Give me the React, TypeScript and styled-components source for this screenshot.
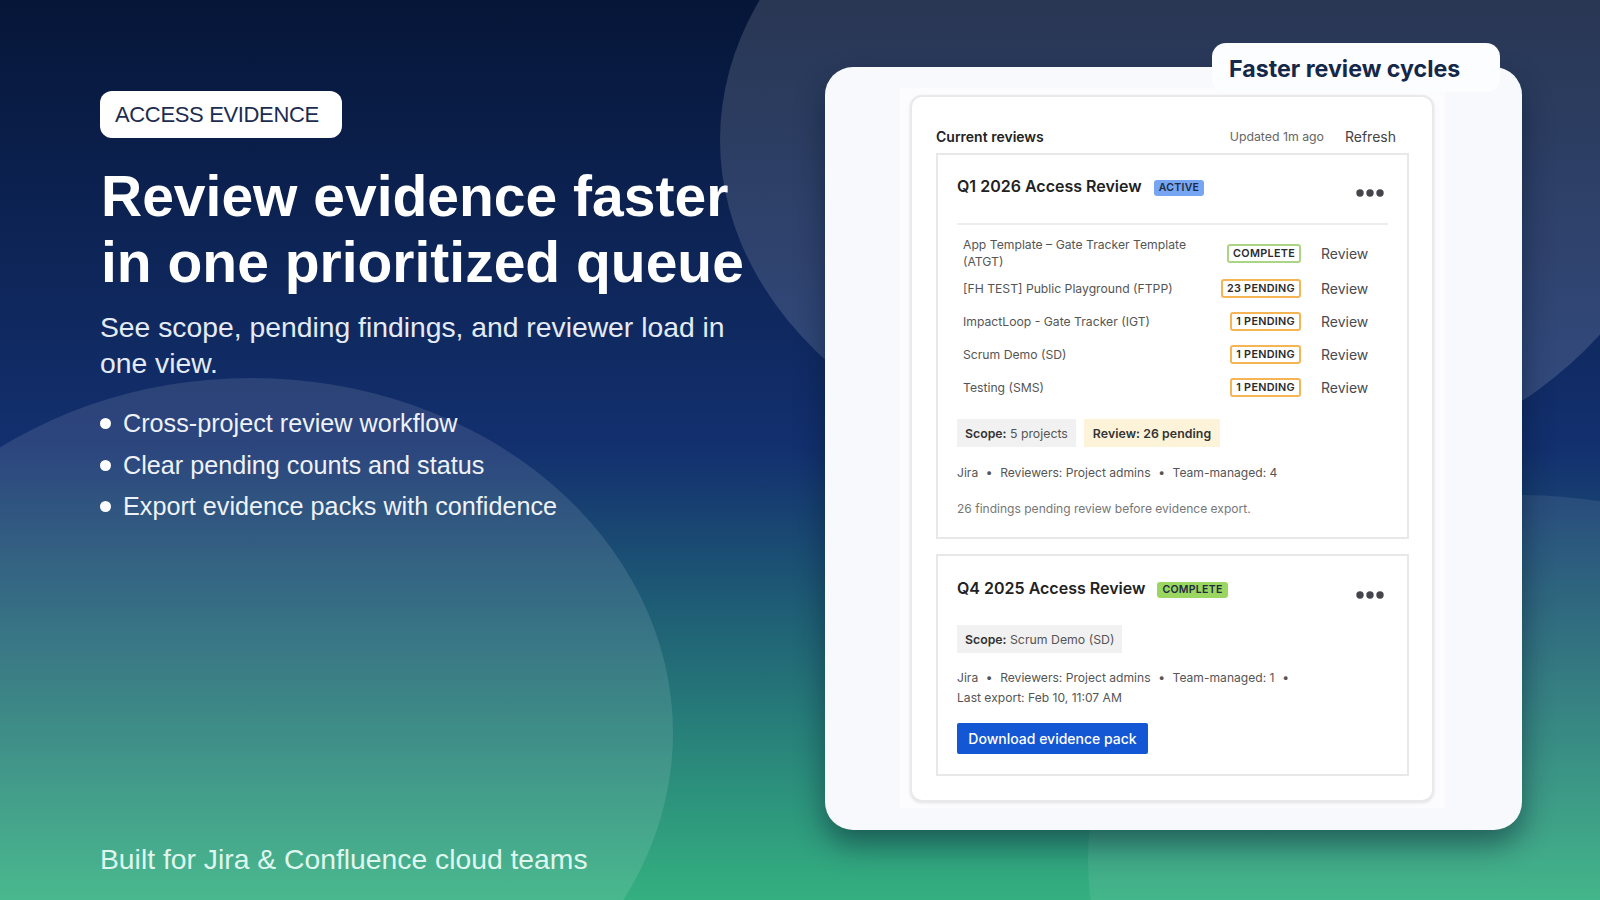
import React from "react";
import styled, { createGlobalStyle } from "styled-components";

const Global = createGlobalStyle`
  html, body { margin: 0; padding: 0; }
  body { font-family: "Liberation Sans", Arial, sans-serif; }
  * { box-sizing: border-box; }
`;

const Page = styled.div`
  position: relative;
  width: 1600px;
  height: 900px;
  overflow: hidden;
  display: flex;
  justify-content: space-between;
  background: linear-gradient(180deg, #061638 0%, #13306f 50%, #34b080 100%);
`;

const Blob = styled.div<{ $x: number; $y: number; $rx: number; $ry: number; $a: number }>`
  position: absolute;
  left: ${(p) => p.$x - p.$rx}px;
  top: ${(p) => p.$y - p.$ry}px;
  width: ${(p) => p.$rx * 2}px;
  height: ${(p) => p.$ry * 2}px;
  border-radius: 50%;
  background: rgba(255, 255, 255, ${(p) => p.$a});
`;

const Left = styled.section`
  position: relative;
  width: 700px;
  height: 900px;
  padding: 91px 0 23px 100px;
  display: flex;
  flex-direction: column;
  align-items: flex-start;
`;

const Eyebrow = styled.div`
  height: 47px;
  padding: 0 23px 0 15px;
  display: flex;
  align-items: center;
  background: #fff;
  border-radius: 12px;
  color: #1c2c50;
  font-size: 22px;
  letter-spacing: -0.35px;
  white-space: nowrap;
`;

const Heading = styled.h1`
  margin: 25px 0 0 1px;
  font-size: 57px;
  line-height: 66px;
  font-weight: 700;
  color: #fff;
  white-space: nowrap;
`;

const Lead = styled.p`
  margin: 15px 0 0;
  width: 640px;
  font-size: 28.3px;
  line-height: 35.5px;
  color: #e4ebf5;
`;

const Bullets = styled.ul`
  margin: 21.5px 0 0;
  padding: 0;
  list-style: none;
  display: flex;
  flex-direction: column;
`;

const Bullet = styled.li`
  height: 41.7px;
  display: flex;
  align-items: center;
  gap: 12px;
  font-size: 25.2px;
  color: #eef2f8;
  white-space: nowrap;
  &::before {
    content: "";
    width: 11px;
    height: 11px;
    border-radius: 50%;
    background: #fff;
  }
`;

const Footer = styled.div`
  margin-top: auto;
  font-size: 28.3px;
  line-height: 36px;
  color: #dff6ee;
  white-space: nowrap;
`;

const Right = styled.section`
  position: relative;
  margin: 67px 78px 0 0;
  width: 697px;
  height: 763px;
`;

const Card = styled.div`
  width: 100%;
  height: 100%;
  padding-top: 21px;
  display: flex;
  justify-content: center;
  padding-right: 2px;
  background: #f8f9fc;
  border-radius: 28px;
  box-shadow: 0 14px 30px rgba(4, 20, 40, 0.48);
`;

const Pill = styled.div`
  position: absolute;
  top: -24px;
  right: 22px;
  width: 288px;
  height: 49px;
  padding: 2px 0 0 17px;
  display: flex;
  align-items: center;
  background: #fcfdfe;
  border-radius: 14px;
  font-family: Inter, "Liberation Sans", sans-serif;
  font-size: 23.2px;
  font-weight: 700;
  color: #14284a;
  white-space: nowrap;
`;

const Shot = styled.div`
  width: 545px;
  height: 720px;
  padding: 7px 11px 0 10px;
  background: #fcfcfe;
  font-family: Inter, "Liberation Sans", sans-serif;
`;

const Panel = styled.div`
  height: 707px;
  padding: 24px 23px 0 24px;
  background: #fff;
  border: 2px solid #e9e9ec;
  border-radius: 12px;
  box-shadow: 0 1px 3px rgba(30, 40, 60, 0.12);
`;

const PanelHead = styled.div`
  height: 30px;
  margin-bottom: 2px;
  display: flex;
  align-items: center;
`;

const PanelTitle = styled.div`
  flex: 1;
  font-size: 14px;
  font-weight: 600;
  color: #222;
`;

const Updated = styled.div`
  font-size: 12.3px;
  color: #666;
`;

const Refresh = styled.div`
  margin: 0 13px 0 21px;
  font-size: 14px;
  color: #444;
`;

const ReviewCard = styled.article`
  padding: 0 19px 18px;
  background: #fff;
  border: 2px solid #e8e8ea;
  & + & {
    margin-top: 15px;
  }
`;

const CardHead = styled.header<{ $divided?: boolean }>`
  height: ${(p) => (p.$divided ? 70 : 69)}px;
  padding-top: ${(p) => (p.$divided ? 19 : 20)}px;
  display: flex;
  align-items: flex-start;
  ${(p) => p.$divided && "border-bottom: 2px solid #eeeeef;"}
`;

const CardTitle = styled.h2`
  margin: 0;
  height: 24px;
  display: flex;
  align-items: center;
  font-size: 16px;
  font-weight: 600;
  color: #222;
  white-space: nowrap;
`;

const State = styled.span<{ $bg: string }>`
  height: 16px;
  margin: 3px 0 0 12px;
  padding: 0 5px;
  display: flex;
  align-items: center;
  background: ${(p) => p.$bg};
  border-radius: 3px;
  font-size: 10.5px;
  font-weight: 600;
  letter-spacing: 0.3px;
  color: #1c2b41;
`;

const More = styled.svg`
  margin: 14px 4px 0 auto;
`;

const Rows = styled.div`
  margin-top: 9px;
  padding-left: 6px;
`;

const Row = styled.div<{ $tall?: boolean }>`
  height: ${(p) => (p.$tall ? 38 : 33)}px;
  display: flex;
  align-items: center;
`;

const Name = styled.div`
  flex: 1;
  max-width: 235px;
  font-size: 12.2px;
  line-height: 17px;
  color: #555;
`;

const Status = styled.span<{ $tone: string }>`
  margin-left: auto;
  height: 19px;
  padding: 0 4px;
  display: flex;
  align-items: center;
  border: 2px solid ${(p) => p.$tone};
  border-radius: 3px;
  font-size: 10.8px;
  font-weight: 600;
  letter-spacing: 0.3px;
  color: #2a2a2e;
  white-space: nowrap;
`;

const ReviewLink = styled.div`
  width: 87px;
  padding-left: 20px;
  font-size: 14px;
  color: #4a4a4f;
`;

const Stats = styled.div<{ $tight?: boolean }>`
  margin-top: ${(p) => (p.$tight ? 0 : 15)}px;
  display: flex;
  gap: 8px;
`;

const Stat = styled.div<{ $warm?: boolean }>`
  height: 28px;
  padding: 0 ${(p) => (p.$warm ? 9 : 8)}px;
  display: flex;
  align-items: center;
  white-space: pre;
  background: ${(p) => (p.$warm ? "#fcf3d9" : "#f1f1f2")};
  font-size: 12.3px;
  letter-spacing: ${(p) => (p.$warm ? 0.08 : 0)}px;
  color: #555;
  b {
    font-weight: 600;
    color: #333;
  }
`;

const Meta = styled.div<{ $gap: number }>`
  margin-top: ${(p) => p.$gap}px;
  font-size: 12.1px;
  line-height: 20px;
  color: #555;
`;

const Sep = styled.span`
  display: inline-block;
  width: 22px;
  text-align: center;
`;

const Note = styled.div`
  margin-top: 16px;
  font-size: 12.05px;
  line-height: 20px;
  color: #777;
`;

const Download = styled.button`
  display: block;
  margin: 15px 0 2px;
  width: 191px;
  height: 31px;
  padding: 0;
  border: 0;
  border-radius: 2px;
  background: #1357d4;
  color: #fff;
  font-family: inherit;
  font-size: 14px;
  font-weight: 500;
`;

const Dots = () => (
  <More width="28" height="10" viewBox="0 0 28 10" aria-hidden>
    <circle cx="4" cy="5" r="3.7" fill="#45454c" />
    <circle cx="14" cy="5" r="3.7" fill="#45454c" />
    <circle cx="24" cy="5" r="3.7" fill="#45454c" />
  </More>
);

const projects = [
  { name: "App Template – Gate Tracker Template (ATGT)", status: "COMPLETE", tone: "#a9d585", tall: true },
  { name: "[FH TEST] Public Playground (FTPP)", status: "23 PENDING", tone: "#f5b555" },
  { name: "ImpactLoop - Gate Tracker (IGT)", status: "1 PENDING", tone: "#f5b555" },
  { name: "Scrum Demo (SD)", status: "1 PENDING", tone: "#f5b555" },
  { name: "Testing (SMS)", status: "1 PENDING", tone: "#f5b555" },
];

export default function App() {
  return (
    <Page>
      <Global />
      <Blob $x={1200} $y={140} $rx={480} $ry={352} $a={0.14} />
      <Blob $x={251} $y={733} $rx={422} $ry={355} $a={0.11} />
      <Blob $x={1520} $y={860} $rx={432} $ry={365} $a={0.08} />
      <Left>
        <Eyebrow>ACCESS EVIDENCE</Eyebrow>
        <Heading>
          Review evidence faster
          <br />
          in one prioritized queue
        </Heading>
        <Lead>See scope, pending findings, and reviewer load in one view.</Lead>
        <Bullets>
          <Bullet>Cross-project review workflow</Bullet>
          <Bullet>Clear pending counts and status</Bullet>
          <Bullet>Export evidence packs with confidence</Bullet>
        </Bullets>
        <Footer>Built for Jira &amp; Confluence cloud teams</Footer>
      </Left>
      <Right>
        <Card>
          <Shot>
            <Panel>
              <PanelHead>
                <PanelTitle>Current reviews</PanelTitle>
                <Updated>Updated 1m ago</Updated>
                <Refresh>Refresh</Refresh>
              </PanelHead>
              <ReviewCard>
                <CardHead $divided>
                  <CardTitle>
                    Q1 2026 Access Review
                    <State $bg="#76a5f3">ACTIVE</State>
                  </CardTitle>
                  <Dots />
                </CardHead>
                <Rows>
                  {projects.map((p) => (
                    <Row key={p.name} $tall={p.tall}>
                      <Name>{p.name}</Name>
                      <Status $tone={p.tone}>{p.status}</Status>
                      <ReviewLink>Review</ReviewLink>
                    </Row>
                  ))}
                </Rows>
                <Stats>
                  <Stat>
                    <b>Scope:</b> 5 projects
                  </Stat>
                  <Stat $warm>
                    <b>Review: 26 pending</b>
                  </Stat>
                </Stats>
                <Meta $gap={16}>
                  Jira<Sep>•</Sep>Reviewers: Project admins<Sep>•</Sep>Team-managed: 4
                </Meta>
                <Note>26 findings pending review before evidence export.</Note>
              </ReviewCard>
              <ReviewCard>
                <CardHead>
                  <CardTitle>
                    Q4 2025 Access Review
                    <State $bg="#9bd660">COMPLETE</State>
                  </CardTitle>
                  <Dots />
                </CardHead>
                <Stats $tight>
                  <Stat>
                    <b>Scope:</b> Scrum Demo (SD)
                  </Stat>
                </Stats>
                <Meta $gap={15}>
                  Jira<Sep>•</Sep>Reviewers: Project admins<Sep>•</Sep>Team-managed: 1<Sep>•</Sep>
                  <br />
                  Last export: Feb 10, 11:07 AM
                </Meta>
                <Download>Download evidence pack</Download>
              </ReviewCard>
            </Panel>
          </Shot>
        </Card>
        <Pill>Faster review cycles</Pill>
      </Right>
    </Page>
  );
}
